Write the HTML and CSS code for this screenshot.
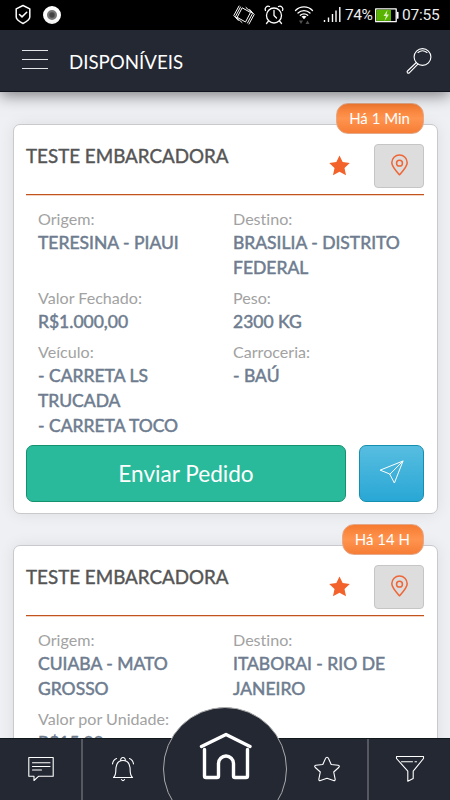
FILE: index.html
```
<!DOCTYPE html>
<html lang="pt-BR">
<head>
<meta charset="utf-8">
<title>Disponíveis</title>
<link rel="stylesheet" href="styles.css">
</head>
<body>
<svg class="defs" width="0" height="0" aria-hidden="true">
  <symbol id="star" viewBox="0 0 24 24"><path d="M12 1.500l3.300 6.900 7.400.9-5.500 5.200 1.600 7.800-6.800-3.700-6.800 3.700 1.600-7.800-5.500-5.200 7.400-.9z"/></symbol>
  <symbol id="pin" viewBox="0 0 20 24"><path d="M10 21.800C6 17.200 1.900 12.800 1.900 9a8.100 8.100 0 0 1 16.200 0c0 3.800-4.100 8.200-8.100 12.800z"/><circle cx="10" cy="9.500" r="3.100"/></symbol>
</svg>
<div class="screen">
  <div class="status">
    <svg class="shield" width="18" height="22" viewBox="0 0 18 22"><path d="M9 1.500l6.800 3.300v8.200c0 3-3.800 5-6.800 6.500-3-1.500-6.800-3.500-6.800-6.500V4.800z"/><path d="M5.500 10.500l2.500 2.400 4.700-4.700"/></svg>
    <span class="record"></span>
    <svg class="vibrate" width="22" height="22" viewBox="0 0 22 22"><path d="M9.500 4l8 4.500-5 9.500-8-4.500zM7.500 3L2.500 12.500l6.500 6M6 2L.8 11.500l4.500 5M14.500 19L19.500 9.500l-6.500-6M16 20l5.200-9.500-4.500-5"/></svg>
    <svg class="alarm" width="20" height="20" viewBox="0 0 20 20"><circle cx="10" cy="10.500" r="7.500"/><path d="M10 5.500v5l2.500 2.500M1.500 5.500A3 3 0 0 1 5.500 1.500M14.500 1.500a3 3 0 0 1 4 4M4.500 16L2.500 18.500M15.500 16l2 2.500"/></svg>
    <svg class="wifi" width="20" height="20" viewBox="0 0 20 20"><path class="arc" d="M1.500 5.500a12 12 0 0 1 17 0M4 8a8.600 8.600 0 0 1 12 0M6.300 10.300a5.300 5.300 0 0 1 7.400 0"/><path class="dot" d="M7.500 11.500q2.500-1.500 5 0L10 14.300z"/><path class="traffic" d="M5 15.500h4L7 19zM11.500 19h4l-2-3.500z"/></svg>
    <svg class="signal" width="18" height="18" viewBox="0 0 18 18"><path d="M1.500 14v2M5.500 11.500V16M9.500 8v8M13 4.500V16M16.800 1v15"/></svg>
    <span class="percent">74%</span>
    <svg class="battery" width="24" height="15" viewBox="0 0 24 15"><rect class="shell" x=".7" y=".9" width="20.500" height="12.800"/><rect class="charge" x="1.500" y="1.700" width="14.500" height="11.200"/><path class="tip" d="M22.700 4.500v5.500"/><path class="bolt" d="M12.500 2L8.500 8h2.500l-1.500 5 4.500-6.500h-2.500z"/></svg>
    <span class="clock">07:55</span>
  </div>

  <header class="topbar">
    <span class="menu"><i></i><i></i><i></i></span>
    <h1>DISPONÍVEIS</h1>
    <svg class="search" width="28" height="28" viewBox="0 0 28 28"><circle cx="17.500" cy="10" r="8.400"/><path d="M11.400 15.500l-8.900 8.500a1.200 1.200 0 0 0 1.800 1.800l8.600-8.700M13 5.500q4.500-3.500 9 0"/></svg>
  </header>

  <main class="list">
    <article class="card">
      <span class="age">Há 1 Min</span>
      <div class="card-head">
        <h2>TESTE EMBARCADORA</h2>
        <svg class="fav" width="23" height="23"><use href="#star"/></svg>
        <span class="map"><svg width="19" height="23"><use href="#pin"/></svg></span>
      </div>
      <div class="details">
        <div><label>Origem:</label><p>TERESINA - PIAUI</p></div>
        <div><label>Destino:</label><p>BRASILIA - DISTRITO FEDERAL</p></div>
        <div><label>Valor Fechado:</label><p>R$1.000,00</p></div>
        <div><label>Peso:</label><p>2300 KG</p></div>
        <div><label>Veículo:</label><p>- CARRETA LS TRUCADA</p><p>- CARRETA TOCO</p></div>
        <div><label>Carroceria:</label><p>- BAÚ</p></div>
      </div>
      <div class="actions">
        <button class="request">Enviar Pedido</button>
        <button class="send"><svg width="26" height="26" viewBox="0 0 26 26"><path d="M1.500 11L24 2l-8.600 22-4.600-8.700zM24 2L10.800 15.300"/></svg></button>
      </div>
    </article>

    <article class="card">
      <span class="age">Há 14 H</span>
      <div class="card-head">
        <h2>TESTE EMBARCADORA</h2>
        <svg class="fav" width="23" height="23"><use href="#star"/></svg>
        <span class="map"><svg width="19" height="23"><use href="#pin"/></svg></span>
      </div>
      <div class="details">
        <div><label>Origem:</label><p>CUIABA - MATO GROSSO</p></div>
        <div><label>Destino:</label><p>ITABORAI - RIO DE JANEIRO</p></div>
        <div><label>Valor por Unidade:</label><p>R$15,00</p></div>
      </div>
    </article>
  </main>

  <nav class="tabs">
    <span class="tab"><svg width="28" height="28" viewBox="0 0 28 28"><path d="M1.800 2.500h24.400v18.800H11.500L7 25.500v-4.200H1.800zM5.500 7.800h17.500M5.500 11.500h17.500M5.500 15h9"/></svg></span>
    <span class="tab"><svg width="26" height="28" viewBox="0 0 26 28"><path d="M3.500 22.500c3-2.500 2-6 2.500-10C6.500 8 9 5.500 13 5.500s6.500 2.500 7 7c.5 4-.5 7.500 2.500 10zM10.800 5.500a2.300 2.300 0 1 1 4.400 0M11.500 24.500q1.500 2.200 3 0M2.500 9q.5-4 4-5.500M23.500 9q-.5-4-4-5.500"/></svg></span>
    <span class="home"><svg width="54" height="50" viewBox="0 0 54 50"><path d="M3.500 16.500L28 4.500l24 12M6.500 19.500V46q0 1.500 1.500 1.500h11q1.500 0 1.500-1.500V33.500a7.500 7.500 0 0 1 15 0V46q0 1.500 1.500 1.500h11q1.500 0 1.500-1.500V19.500"/></svg></span>
    <span class="tab"><svg width="28" height="28" viewBox="0 0 28 28"><path d="M14 2.200q1 0 1.500 1.300l2.700 6 7 .8q2 .5.500 2.200l-5 4.500 1.500 7.300q0 1.800-1.700 1.200L14 23.200l-6.500 2.300q-1.700.6-1.700-1.200L7.300 17l-5-4.500q-1.500-1.700.5-2.200l7-.8 2.700-6Q13 2.200 14 2.200z"/></svg></span>
    <span class="tab"><svg width="30" height="28" viewBox="0 0 30 28"><path d="M1.500 1.500h27v2L18.200 16.200v7.300l-5.400 2.700v-10L1.500 3.500zM6.500 6.700h11M20 6.700h1.500"/></svg></span>
  </nav>
</div>
</body>
</html>
```
FILE: styles.css
```
* { box-sizing: border-box; }
body { margin: 0; font-family: Lato, "Liberation Sans", sans-serif; font-variant-ligatures: none; background: #eff0f4; }
h1, h2, p { margin: 0; font-weight: 400; }
svg { flex: none; fill: none; stroke: #fff; stroke-width: 1.1; stroke-linejoin: round; stroke-linecap: round; }
.defs { position: absolute; }
.screen { width: 450px; height: 800px; display: flex; flex-direction: column; overflow: hidden; position: relative; }

.status { height: 30px; flex: none; background: #000; color: #eee; display: flex; align-items: center; padding: 0 9px 0 14px; font-family: Roboto, sans-serif; font-size: 15.5px; }
.shield { stroke-width: 1.5; }
.record { width: 18px; height: 18px; margin-left: 11px; border-radius: 50%; border: 4px solid #fff; background: radial-gradient(circle, #444 0 2px, #777 3.5px); }
.vibrate { margin-left: auto; stroke-width: 1; }
.alarm { margin-left: 9px; stroke-width: 1.3; }
.wifi { margin-left: 10px; }
.wifi .arc { stroke-width: 1.3; }
.wifi .dot { fill: #fff; stroke: none; }
.wifi .traffic { fill: #555; stroke: none; }
.signal { margin-left: 9px; stroke-width: 1.4; stroke-linecap: butt; }
.percent { margin-left: 4px; width: 28px; letter-spacing: -.5px; }
.battery { margin-left: 2px; }
.battery .shell { stroke-width: 1.3; }
.battery .charge { fill: #59b500; stroke: none; }
.battery .tip { stroke-width: 1.7; }
.battery .bolt { fill: #dff0c8; stroke: none; }
.clock { margin-left: 3px; width: 39px; letter-spacing: -.25px; }

.topbar { height: 62px; flex: none; background: #242833; border-bottom: 1px solid #10141f; display: flex; align-items: center; padding: 0 17px 0 22px; color: #fff; box-shadow: 0 3px 15px rgba(0,0,0,.5); position: relative; z-index: 1; }
.menu { width: 26px; height: 19px; margin-bottom: 2px; display: flex; flex-direction: column; justify-content: space-between; }
.menu i { height: 1px; background: #e4e5e8; }
.topbar h1 { margin-left: 21px; font-size: 18.7px; line-height: 24px; padding-top: 3px; }
.search { margin-left: auto; }

.list { flex: 1; min-height: 0; padding: 32px 12px 0 13px; display: flex; flex-direction: column; gap: 31px; }
.card { flex: none; position: relative; background: #fff; border: 1px solid #c9c9cd; border-radius: 7px; padding: 0 13px 11px 12px; box-shadow: 0 0 15px rgba(0,0,0,.08); height: 390px; }
.age { position: absolute; right: 13px; top: -22px; height: 31px; padding: 0 13px 0 12px; border: 1px solid #e3a98a; border-radius: 12px; background: linear-gradient(#f67b30, #ff944f 50%, #f67d35); color: #fff; font-size: 15px; line-height: 29px; }
.card-head { height: 70px; border-bottom: 1px solid #c0531e; box-shadow: 0 1px 0 #f4d3c0; display: flex; align-items: center; }
.card-head h2 { flex: 1; font-size: 18.8px; line-height: 24px; color: #555; -webkit-text-stroke: .4px #555; margin-top: -7px; }
.fav { fill: #f2622a; stroke: none; margin: 12px 23px 0 0; }
.map { width: 50px; height: 44px; margin-top: 12px; border: 1px solid #c5c5c5; border-radius: 4px; background: #ddd; display: flex; align-items: center; justify-content: center; }
.map svg { stroke: #ee6637; stroke-width: 1.6; }

.details { padding: 13px 0 0 12px; display: grid; grid-template-columns: 195px 190px; row-gap: 7px; }
.details div { padding-right: 15px; }
.details label { display: block; font-weight: 400; font-size: 16.1px; line-height: 22px; color: #a2a2a2; }
.details p { font-size: 17.5px; line-height: 25px; color: #6e7c8f; -webkit-text-stroke: .5px #6e7c8f; }
.details div:nth-child(odd) { padding-right: 50px; }
.details div:nth-child(odd) label { white-space: nowrap; }
.actions { margin-top: 7px; height: 57px; display: flex; gap: 13px; }
.actions button { margin: 0; padding: 0; border-radius: 7px; color: #fff; font: 22.6px Lato, sans-serif; }
.request { flex: 1; background: #28ba9a; border: 1px solid #14916f; }
.send { width: 65px; background: linear-gradient(#57bde0, #29a7d5); border: 1px solid #158fae; display: flex; align-items: center; justify-content: center; }
.send svg { stroke-width: 1; margin-bottom: 3px; }

.tabs { position: relative; z-index: 2; height: 62px; flex: none; background: #242833; border-top: 1px solid #101a1d; display: grid; grid-template-columns: 83px 81px 122px 83px 81px; grid-template-rows: 61px; }
.tab { display: flex; align-items: center; justify-content: center; padding: 0 2px 2px 0; }
.tab:first-child { border-right: 2px solid #565961; padding-right: 0; }
.tab:last-child { border-left: 2px solid #565961; margin-left: -2px; padding-right: 0; }
.home { width: 124px; height: 124px; margin: -32px 0 0 -1px; border: 1px solid #aaa; border-radius: 50%; background: #242833; display: flex; align-items: flex-start; justify-content: center; padding-top: 22px; }
.home svg { stroke-width: 3.4; }
```
